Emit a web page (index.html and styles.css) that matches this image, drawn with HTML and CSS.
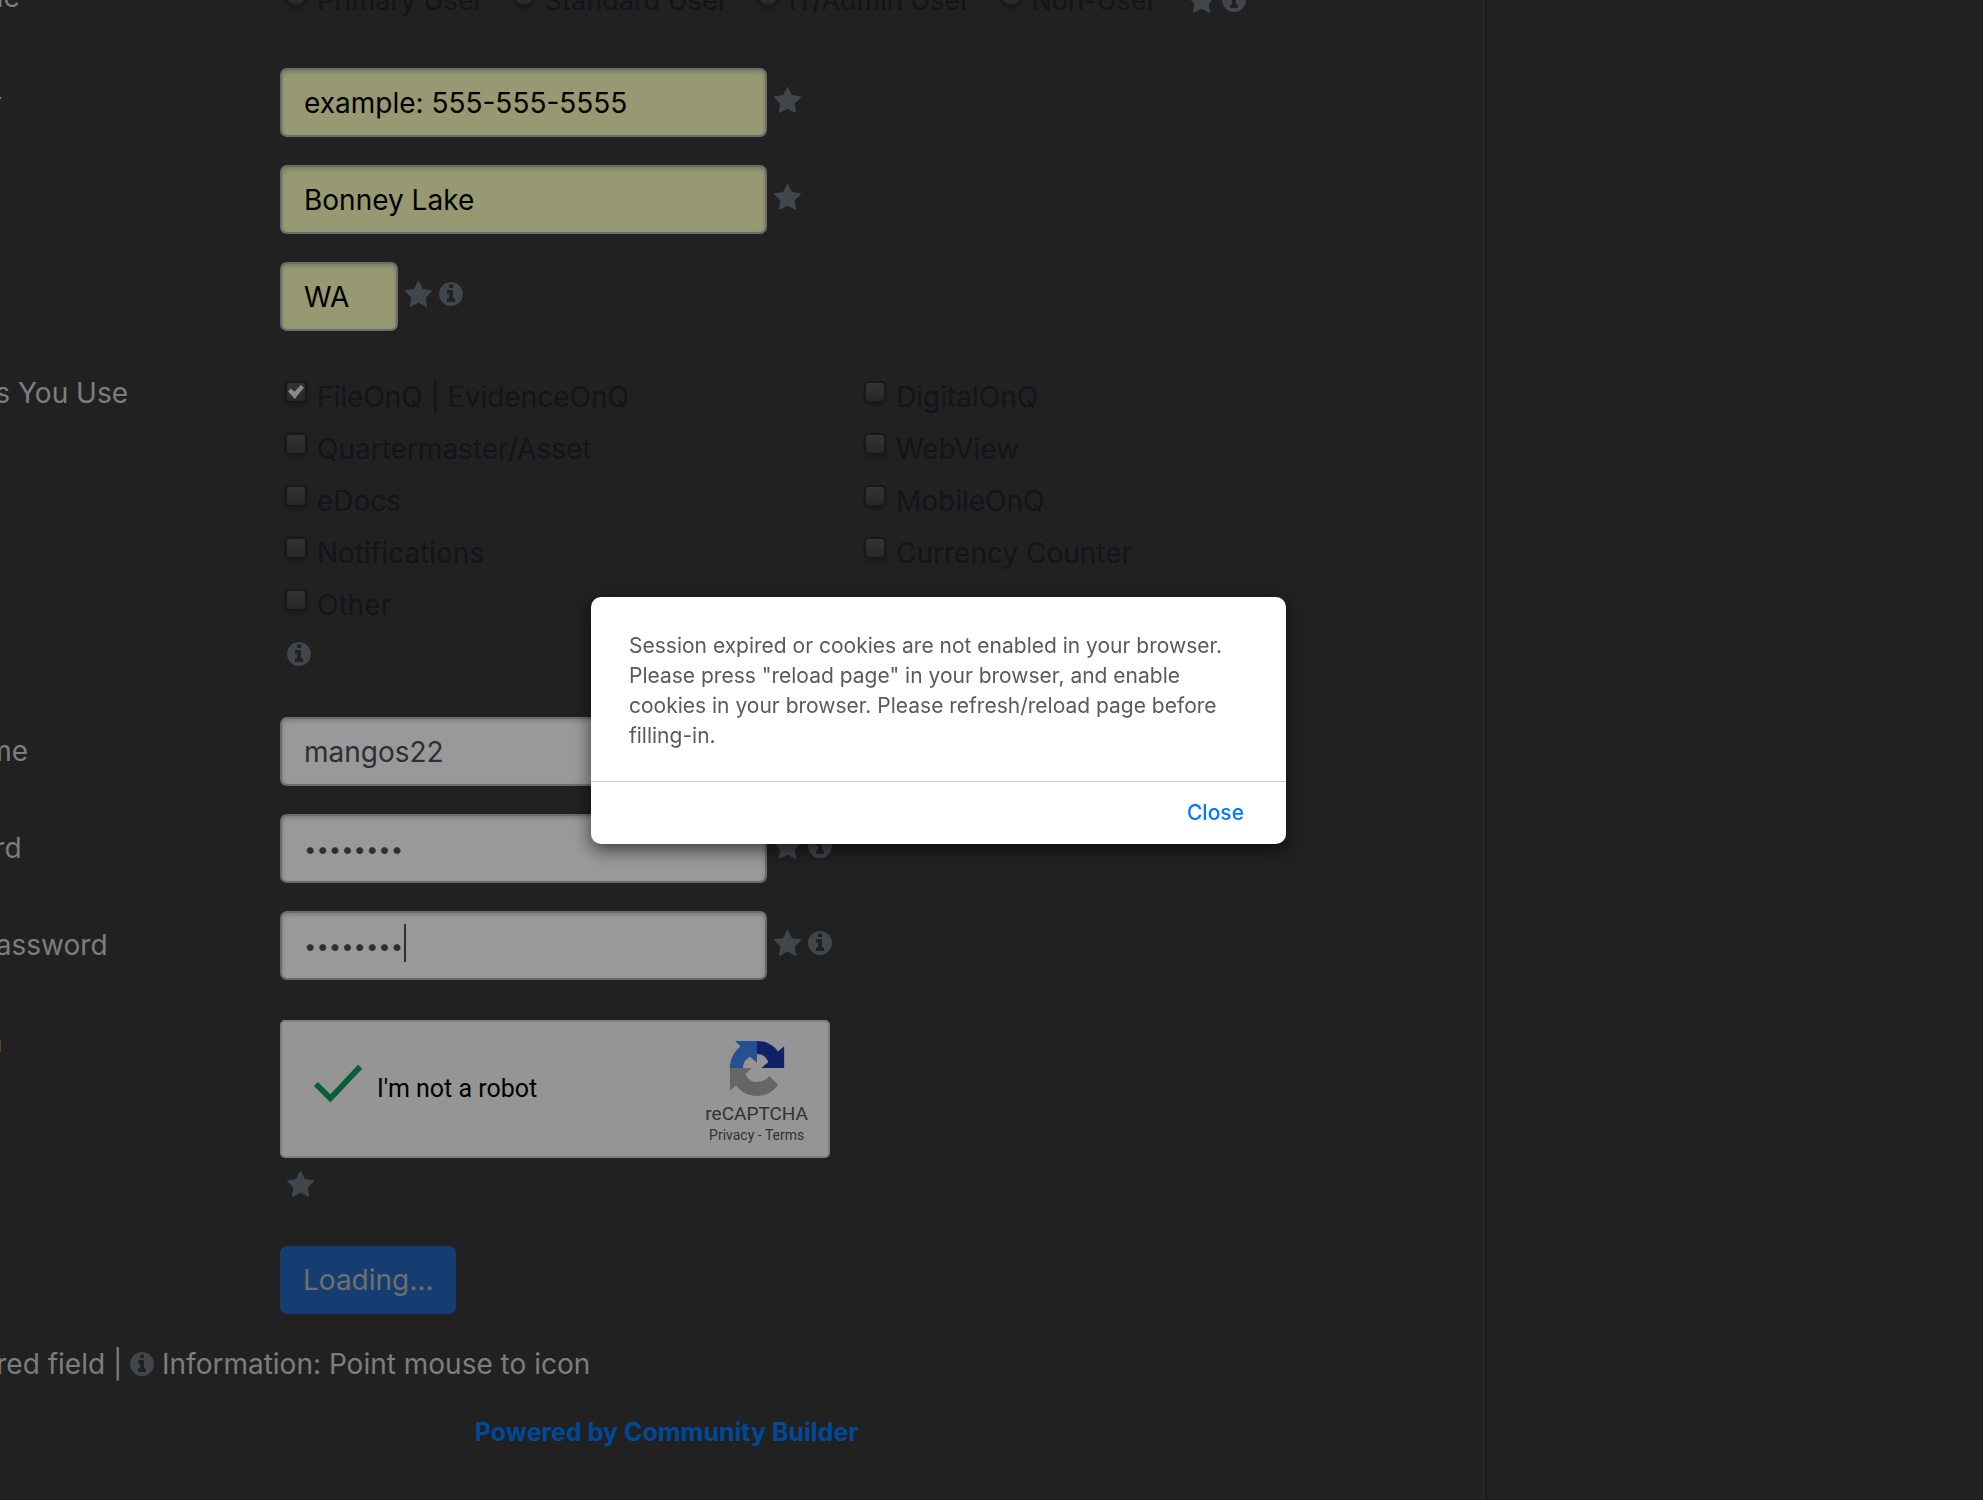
FILE: index.html
```html
<!DOCTYPE html>
<html lang="en">
  <head>
    <meta charset="UTF-8" />
    <meta name="viewport" content="width=device-width, initial-scale=1.0" />
    <title>Registration</title>
    <link rel="stylesheet" href="styles.css">
  </head>
  <body>
    <svg class="sprite" aria-hidden="true">
      <symbol id="star" viewBox="0 0 1664 1600">
        <path d="M1664 615q0 22-26 48l-363 354 86 500q1 7 1 20 0 21-10.500 35.500t-30.500 14.500q-19 0-40-12l-449-236-449 236q-22 12-40 12-21 0-31.500-14.500t-10.500-35.500q0-6 2-20l86-500-364-354q-25-27-25-48 0-37 56-46l502-73 225-455q19-41 49-41t49 41l225 455 502 73q56 9 56 46z" />
      </symbol>
      <symbol id="info" viewBox="0 128 1536 1536">
        <path d="M1024 1376v-160q0-14-9-23t-23-9h-96v-512q0-14-9-23t-23-9h-320q-14 0-23 9t-9 23v160q0 14 9 23t23 9h96v320h-96q-14 0-23 9t-9 23v160q0 14 9 23t23 9h448q14 0 23-9t9-23zm-128-896v-160q0-14-9-23t-23-9h-192q-14 0-23 9t-9 23v160q0 14 9 23t23 9h192q14 0 23-9t9-23zm640 416q0 209-103 385.500t-279.500 279.500-385.500 103-385.500-103-279.500-279.500-103-385.500 103-385.500 279.500-279.500 385.500-103 385.500 103 279.500 279.500 103 385.500z" />
      </symbol>
    </svg>

    <main class="page">
      <form class="form">
        <div class="row role-row">
          <span class="label">User Role</span>
          <div class="field radios">
            <label class="option"><input type="radio" name="role" /> Primary User</label>
            <label class="option"><input type="radio" name="role" /> Standard User</label>
            <label class="option"><input type="radio" name="role" /> IT/Admin User</label>
            <label class="option"><input type="radio" name="role" /> Non-User</label>
            <span class="icons"><svg class="star"><use href="#star" /></svg><svg class="info"><use href="#info" /></svg></span>
          </div>
        </div>

        <div class="row">
          <label class="label" for="phone">Phone #</label>
          <div class="field">
            <input class="control filled" type="text" id="phone" value="example: 555-555-5555" />
            <span class="icons"><svg class="star"><use href="#star" /></svg></span>
          </div>
        </div>

        <div class="row">
          <label class="label" for="city">City</label>
          <div class="field">
            <input class="control filled" type="text" id="city" value="Bonney Lake" />
            <span class="icons"><svg class="star"><use href="#star" /></svg></span>
          </div>
        </div>

        <div class="row">
          <label class="label" for="state">State</label>
          <div class="field">
            <input class="control filled short" type="text" id="state" value="WA" />
            <span class="icons"><svg class="star"><use href="#star" /></svg><svg class="info"><use href="#info" /></svg></span>
          </div>
        </div>

        <div class="row products-row">
          <span class="label">Products You Use</span>
          <div class="products">
            <label class="option"><input type="checkbox" checked /> FileOnQ | EvidenceOnQ</label>
            <label class="option"><input type="checkbox" /> DigitalOnQ</label>
            <label class="option"><input type="checkbox" /> Quartermaster/Asset</label>
            <label class="option"><input type="checkbox" /> WebView</label>
            <label class="option"><input type="checkbox" /> eDocs</label>
            <label class="option"><input type="checkbox" /> MobileOnQ</label>
            <label class="option"><input type="checkbox" /> Notifications</label>
            <label class="option"><input type="checkbox" /> Currency Counter</label>
            <label class="option"><input type="checkbox" /> Other</label>
            <span class="icons below"><svg class="info"><use href="#info" /></svg></span>
          </div>
        </div>

        <div class="row">
          <label class="label" for="username">Username</label>
          <div class="field">
            <input class="control" type="text" id="username" value="mangos22" />
            <span class="icons"><svg class="star"><use href="#star" /></svg><svg class="info"><use href="#info" /></svg></span>
          </div>
        </div>

        <div class="row">
          <label class="label" for="password">Password</label>
          <div class="field">
            <input class="control password" type="password" id="password" value="12345678" />
            <span class="icons"><svg class="star"><use href="#star" /></svg><svg class="info"><use href="#info" /></svg></span>
          </div>
        </div>

        <div class="row">
          <label class="label" for="verify">Verify Password</label>
          <div class="field">
            <div class="caret-box">
              <input class="control password" type="password" id="verify" value="12345678" />
              <span class="caret"></span>
            </div>
            <span class="icons"><svg class="star"><use href="#star" /></svg><svg class="info"><use href="#info" /></svg></span>
          </div>
        </div>

        <div class="row captcha-row">
          <span class="label">Captcha</span>
          <div>
            <div class="captcha">
              <svg class="tick" viewBox="0 0 52 40"><path d="M3 21L18 36L49 3" /></svg>
              <span class="robot">I'm not a robot</span>
              <div class="brand">
                <svg class="logo" viewBox="0 0 64 64">
                  <path fill="#1c3aa9" d="M63 32V7l-7 6C50 5 41 1 32 1v15c6 0 10 3 13 9l-8 7z" />
                  <path fill="#4285f4" d="M32 1H7l6 6C5 14 1 23 1 32h15c0-6 3-10 8-13l8 7z" />
                  <path fill="#ababab" d="M1 32v26l7-6c6 8 15 12 24 12 10 0 19-5 24-13L46 41c-3 4-8 7-14 7s-10-3-13-9l7-7z" />
                </svg>
                <span class="brand-name">reCAPTCHA</span>
                <span class="terms"><a href="#">Privacy</a> - <a href="#">Terms</a></span>
              </div>
            </div>
            <span class="icons below"><svg class="star"><use href="#star" /></svg></span>
          </div>
        </div>

        <div class="row">
          <span></span>
          <div><button class="submit" type="submit">Loading...</button></div>
        </div>

        <p class="legend">
          <svg class="star"><use href="#star" /></svg> Required field |
          <svg class="info"><use href="#info" /></svg> Information: Point mouse to icon
        </p>
        <p class="powered"><a href="#">Powered by Community Builder</a></p>
      </form>
    </main>

    <div class="overlay">
      <div class="dialog" role="dialog" aria-modal="true">
        <p class="message">Session expired or cookies are not enabled in your browser. Please press "reload page" in your browser, and enable cookies in your browser. Please refresh/reload page before filling-in.</p>
        <div class="actions"><button class="close" type="button">Close</button></div>
      </div>
    </div>
  </body>
</html>
```

FILE: styles.css
```css
* {
  box-sizing: border-box;
}
body {
  margin: 0;
  min-height: 100vh;
  overflow: hidden;
  background: #373737;
  color: #d0d0d0;
  font-family: Inter, "Liberation Sans", sans-serif;
  font-size: 28px;
  line-height: 44px;
}
.sprite {
  position: absolute;
  width: 0;
  height: 0;
}

/* the page is scrolled down and to the right */
.page {
  display: flow-root;
  width: 75%;
  min-height: 100vh;
  border-right: 2px solid #2c2c2c;
  box-shadow: inset -2px 0 #404040;
}
.form {
  margin-left: -108px;
  margin-top: -25px;
}
.row {
  display: grid;
  grid-template-columns: 388px 1fr;
  margin-bottom: 28px;
}
.label {
  padding-top: 12px;
}
.field {
  display: flex;
  align-items: flex-start;
}
.role-row .label {
  padding-top: 0;
}
.role-row {
  margin-bottom: 45px;
}
.radios {
  gap: 24px;
  padding-top: 4px;
  font-size: 27px;
}
.option {
  display: flex;
  gap: 10px;
  color: #1f242c;
}
.option input {
  appearance: none;
  width: 22px;
  height: 22px;
  margin: 6px 0 0 5px;
  border: 2px solid #2b2b2b;
  border-radius: 5px;
  background: linear-gradient(#565656, #424242);
  box-shadow: 0 2px 3px #2b2b2b;
}
.option input[type="radio"] {
  border-radius: 50%;
}
.option input:checked {
  display: grid;
  place-items: center;
}
.option input:checked::before {
  content: "";
  width: 16px;
  height: 14px;
  background: #e4e4e4;
  clip-path: polygon(0 45%, 18% 25%, 40% 48%, 80% 0, 100% 18%, 42% 100%);
}
.control {
  display: block;
  width: 487px;
  height: 69px;
  padding: 0 22px;
  border: 2px solid #adb3ba;
  border-radius: 7px;
  background: #fff;
  box-shadow: inset 0 2px 4px rgba(0, 0, 0, 0.2);
  color: #495057;
  font: inherit;
}
.control.filled {
  background: #faffbd;
  color: #000;
}
.control.short {
  width: 118px;
}
.control.password {
  font-size: 22px;
}
.caret-box {
  position: relative;
}
.caret {
  position: absolute;
  top: 13px;
  left: 124px;
  width: 2px;
  height: 38px;
  background: #495057;
}
.icons {
  display: flex;
  align-items: center;
  gap: 7px;
  padding: 19px 0 0 7px;
}
.radios .icons {
  padding: 8px 0 0 7px;
}
svg.star,
svg.info {
  fill: #6c757d;
}
svg.star {
  width: 27px;
  height: 26px;
}
svg.info {
  width: 24px;
  height: 24px;
}

.products {
  display: grid;
  grid-template-columns: repeat(2, 579px);
  grid-auto-rows: 52px;
  padding: 16px 0 2px;
}
.icons.below {
  grid-column: 1;
  align-items: flex-start;
  padding: 7px 0 0 7px;
}

.captcha-row {
  padding-top: 12px;
  margin-bottom: 49px;
}
.captcha-row .label {
  padding-top: 0;
}
.captcha-row .icons {
  padding-top: 13px;
}
.captcha {
  display: flex;
  align-items: center;
  width: 550px;
  height: 138px;
  padding: 0 20px 0 31px;
  border: 2px solid #d3d3d3;
  border-radius: 5px;
  background: #f9f9f9;
  color: #000;
  font-family: Roboto, sans-serif;
}
.tick {
  width: 50px;
  height: 40px;
  margin-bottom: 12px;
  fill: none;
  stroke: #0f9d58;
  stroke-width: 6px;
}
.robot {
  margin-left: 14px;
  font-size: 25px;
}
.brand {
  display: flex;
  flex-direction: column;
  align-items: center;
  margin-left: auto;
  padding-top: 6px;
  color: #555;
}
.logo {
  width: 56px;
  height: 56px;
}
.brand-name {
  margin-top: 6px;
  font-size: 19px;
  line-height: 24px;
}
.terms {
  font-size: 14px;
  line-height: 18px;
}
.terms a {
  color: #555;
  text-decoration: none;
}

.submit {
  display: block;
  height: 68px;
  padding: 0 23px;
  border: 0;
  border-radius: 7px;
  background: #2467bc;
  color: #b9b9b9;
  font: inherit;
}
.legend {
  margin: 0 0 0 -5px;
}
.legend svg {
  vertical-align: -2px;
}
.powered {
  margin: 24px 0 0;
  padding-right: 44px;
  text-align: center;
  font-size: 25px;
  font-weight: 700;
}
.powered a {
  color: #007bff;
  text-decoration: none;
}

.overlay {
  position: fixed;
  inset: 0;
  display: grid;
  place-items: center;
  padding-right: 106px;
  padding-bottom: 60px;
  background: rgba(0, 0, 0, 0.4);
}
.dialog {
  width: 695px;
  border-radius: 10px;
  background: #fff;
  box-shadow: 0 6px 18px rgba(0, 0, 0, 0.6);
}
.message {
  margin: 0;
  padding: 34px 42px 30px 38px;
  color: #5a5a5a;
  font-size: 21px;
  line-height: 30px;
}
.actions {
  display: flex;
  justify-content: flex-end;
  padding: 16px 42px;
  border-top: 1px solid #ccc;
}
.close {
  padding: 0;
  border: 0;
  background: none;
  color: #007aff;
  font: inherit;
  font-size: 21px;
  font-weight: 500;
  line-height: 30px;
}
```
